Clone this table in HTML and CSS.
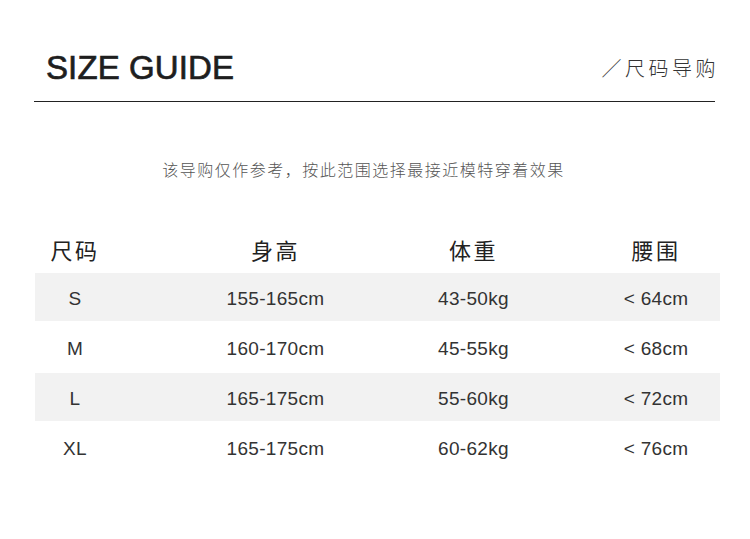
FILE: index.html
```html
<!DOCTYPE html>
<html lang="zh-CN">
<head>
<meta charset="utf-8">
<title>Size Guide</title>
<link rel="stylesheet" href="styles.css">
</head>
<body>
  <header class="head">
    <h1 class="title">SIZE GUIDE</h1>
    <span class="title-cn">／尺码导购</span>
  </header>
  <p class="note">该导购仅作参考，按此范围选择最接近模特穿着效果</p>
  <section class="table">
    <div class="row row-head">
      <span class="cell c1">尺码</span>
      <span class="cell c2">身高</span>
      <span class="cell c3">体重</span>
      <span class="cell c4">腰围</span>
    </div>
    <div class="rows">
      <div class="row row-data shade">
        <span class="cell c1">S</span>
        <span class="cell c2">155-165cm</span>
        <span class="cell c3">43-50kg</span>
        <span class="cell c4">&lt; 64cm</span>
      </div>
      <div class="row row-data">
        <span class="cell c1">M</span>
        <span class="cell c2">160-170cm</span>
        <span class="cell c3">45-55kg</span>
        <span class="cell c4">&lt; 68cm</span>
      </div>
      <div class="row row-data shade">
        <span class="cell c1">L</span>
        <span class="cell c2">165-175cm</span>
        <span class="cell c3">55-60kg</span>
        <span class="cell c4">&lt; 72cm</span>
      </div>
      <div class="row row-data">
        <span class="cell c1">XL</span>
        <span class="cell c2">165-175cm</span>
        <span class="cell c3">60-62kg</span>
        <span class="cell c4">&lt; 76cm</span>
      </div>
    </div>
  </section>
</body>
</html>
```
FILE: styles.css
```css
html, body {
  margin: 0;
  padding: 0;
  background: #ffffff;
}

body {
  font-family: "Liberation Sans", Arial, "Noto Sans CJK SC", sans-serif;
  color: #333333;
}

.head {
  margin: 50px 35px 0 34px;
  height: 35px;
  padding: 0 0 16px 12px;
  border-bottom: 1px solid #222222;
  display: flex;
  align-items: center;
  justify-content: space-between;
}

.title {
  margin: 0;
  font-size: 33px;
  line-height: 33px;
  font-weight: 400;
  letter-spacing: 0.1px;
  color: #1e1e1e;
  -webkit-text-stroke: 0.7px #1e1e1e;
}

.title-cn {
  font-family: "Noto Sans CJK SC", sans-serif;
  font-size: 20px;
  line-height: 24px;
  font-weight: 300;
  letter-spacing: 3.5px;
  color: #333333;
  margin-right: -4px;
}

.note {
  margin: 55px 0 0 0;
  padding-right: 23px;
  text-align: center;
  font-family: "Noto Sans CJK SC", sans-serif;
  font-size: 16px;
  line-height: 24px;
  font-weight: 300;
  letter-spacing: 1.5px;
  color: #555555;
}

.table {
  margin: 43px 30px 0 35px;
  display: flex;
  flex-direction: column;
}

.rows {
  display: flex;
  flex-direction: column;
  gap: 2px;
}

.row {
  display: grid;
  grid-template-columns: 80px 321px 75px 1fr;
  align-items: center;
}

.row-head {
  height: 49px;
  font-family: "Noto Sans CJK SC", sans-serif;
  font-size: 22px;
  line-height: 30px;
  letter-spacing: 2.5px;
  color: #222222;
}

.row-data {
  height: 45px;
  padding-top: 3px;
  font-size: 19px;
  line-height: 24px;
  letter-spacing: 0.3px;
  color: #333333;
}

.shade {
  background: #f2f2f2;
}

.cell {
  text-align: center;
  white-space: nowrap;
}

.c4 {
  padding-left: 81px;
}
```
